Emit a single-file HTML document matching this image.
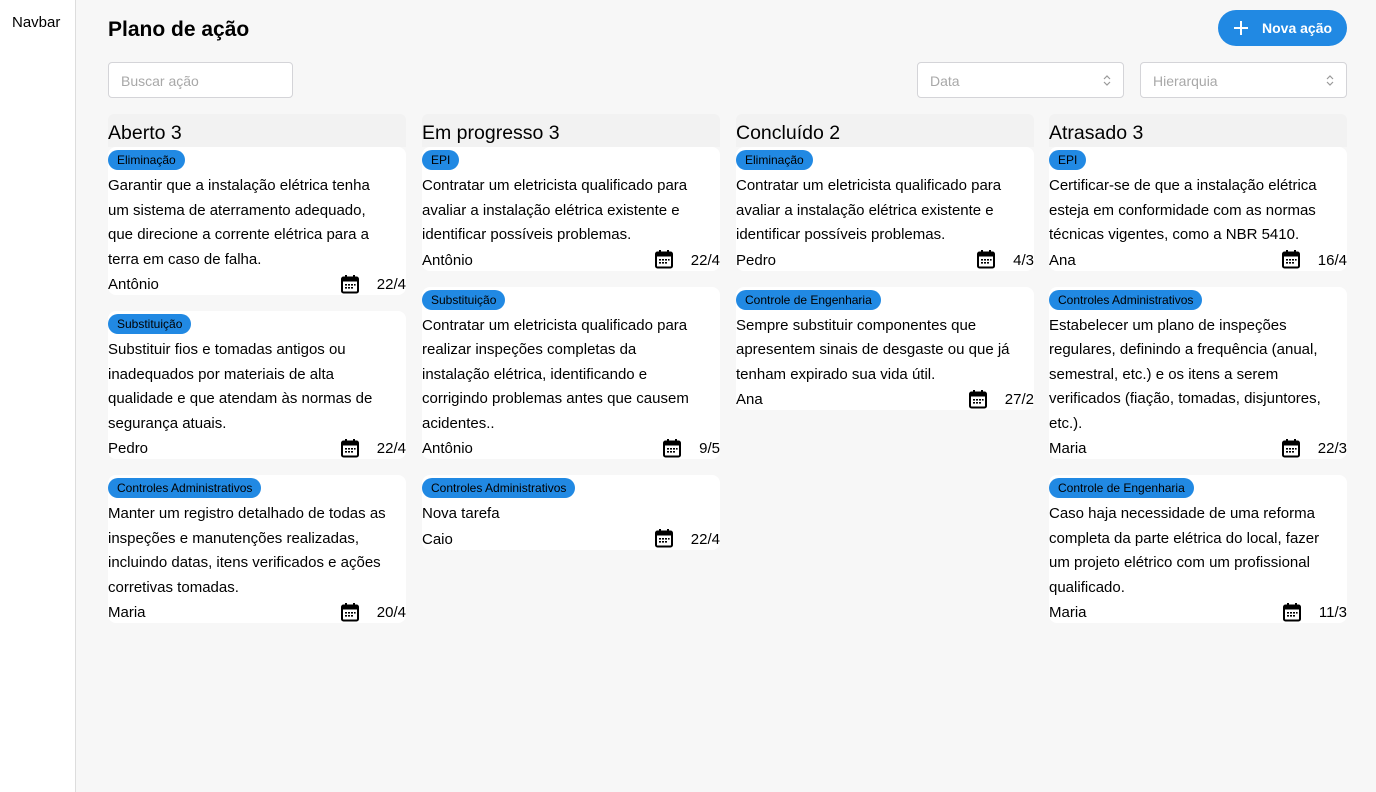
<!DOCTYPE html>
<html><head><meta charset="utf-8"><style>
*{box-sizing:border-box;margin:0;padding:0}
body{width:1376px;height:792px;overflow:hidden;background:#f7f7f7;font-family:"Liberation Sans",sans-serif;color:#000;position:relative}
.nav{position:absolute;left:0;top:0;width:76px;height:792px;background:#fff;border-right:1px solid #ddd;font-size:15px;padding:14px 0 0 12px}
h1{position:absolute;left:108px;top:18px;font-size:21px;font-weight:bold}
.btn{position:absolute;left:1218px;top:10px;width:129px;height:36px;border-radius:18px;background:#2189e3;color:#fff;font-weight:bold;font-size:14px;line-height:36px;padding-left:44px}
.btn svg{position:absolute;left:15px;top:10px}
.inp{position:absolute;top:62px;height:36px;background:#fff;border:1px solid #d4d4d8;border-radius:4px;color:#a8a8a8;font-size:14px;line-height:36px;padding-left:12px}
.inp svg{position:absolute;right:12px;top:11px}
.col{position:absolute;top:114px;width:298px}
.ch{height:33px;background:#f2f2f2;font-size:19.5px;line-height:38px;border-radius:6px 6px 0 0}
.card{background:#fff;border-radius:8px;margin-bottom:16px}
.card:first-of-type{border-radius:0 0 8px 8px}
.tag{display:inline-block;margin-top:3px;height:20px;line-height:21px;padding:0 9px;border-radius:10px;background:#2189e3;font-size:12px;margin-bottom:3px;vertical-align:top}
.t{font-size:15px;line-height:24.5px;white-space:nowrap;padding-top:1px}
.f{display:flex;font-size:15px;line-height:24.5px;height:23px;align-items:center;padding-top:0}
.f span{position:relative;top:2px}
.f span:first-child{flex:1}
.f svg{margin-right:17px;margin-top:0}
</style></head><body>
<div class="nav">Navbar</div>
<h1>Plano de ação</h1>
<div class="btn"><svg width="16" height="16" viewBox="0 0 16 16"><path d="M8 1v14M1 8h14" stroke="#fff" stroke-width="2"/></svg>Nova ação</div>
<div class="inp" style="left:108px;width:185px">Buscar ação</div>
<div class="inp" style="left:917px;width:207px">Data<svg width="8" height="13" viewBox="0 0 8 13"><path d="M1 5l3-3 3 3M1 8l3 3 3-3" stroke="#999" fill="none" stroke-width="1.2"/></svg></div>
<div class="inp" style="left:1140px;width:207px">Hierarquia<svg width="8" height="13" viewBox="0 0 8 13"><path d="M1 5l3-3 3 3M1 8l3 3 3-3" stroke="#999" fill="none" stroke-width="1.2"/></svg></div>

<svg width="0" height="0" style="position:absolute"><defs><symbol id="cal" viewBox="0 0 20 20"><rect x="2" y="3.5" width="16" height="15" rx="1.5" fill="none" stroke="#000" stroke-width="2"/><rect x="2" y="3.5" width="16" height="4" fill="#000"/><path d="M6 1v4M14 1v4" stroke="#000" stroke-width="2"/><g fill="#000"><rect x="5" y="10" width="2" height="1.6"/><rect x="8" y="10" width="2" height="1.6"/><rect x="11" y="10" width="2" height="1.6"/><rect x="14" y="10" width="1.6" height="1.6"/><rect x="5" y="13" width="2" height="1.6"/><rect x="8" y="13" width="2" height="1.6"/><rect x="11" y="13" width="2" height="1.6"/></g></symbol></defs></svg>

<div class="col" style="left:108px">
<div class="ch">Aberto 3</div>
<div class="card"><span class="tag">Eliminação</span><div class="t">Garantir que a instalação elétrica tenha<br>um sistema de aterramento adequado,<br>que direcione a corrente elétrica para a<br>terra em caso de falha.</div><div class="f"><span>Antônio</span><svg width="20" height="20"><use href="#cal"/></svg><span>22/4</span></div></div>
<div class="card"><span class="tag">Substituição</span><div class="t">Substituir fios e tomadas antigos ou<br>inadequados por materiais de alta<br>qualidade e que atendam às normas de<br>segurança atuais.</div><div class="f"><span>Pedro</span><svg width="20" height="20"><use href="#cal"/></svg><span>22/4</span></div></div>
<div class="card"><span class="tag">Controles Administrativos</span><div class="t">Manter um registro detalhado de todas as<br>inspeções e manutenções realizadas,<br>incluindo datas, itens verificados e ações<br>corretivas tomadas.</div><div class="f"><span>Maria</span><svg width="20" height="20"><use href="#cal"/></svg><span>20/4</span></div></div>
</div>

<div class="col" style="left:422px">
<div class="ch">Em progresso 3</div>
<div class="card"><span class="tag">EPI</span><div class="t">Contratar um eletricista qualificado para<br>avaliar a instalação elétrica existente e<br>identificar possíveis problemas.</div><div class="f"><span>Antônio</span><svg width="20" height="20"><use href="#cal"/></svg><span>22/4</span></div></div>
<div class="card"><span class="tag">Substituição</span><div class="t">Contratar um eletricista qualificado para<br>realizar inspeções completas da<br>instalação elétrica, identificando e<br>corrigindo problemas antes que causem<br>acidentes..</div><div class="f"><span>Antônio</span><svg width="20" height="20"><use href="#cal"/></svg><span>9/5</span></div></div>
<div class="card"><span class="tag">Controles Administrativos</span><div class="t">Nova tarefa</div><div class="f"><span>Caio</span><svg width="20" height="20"><use href="#cal"/></svg><span>22/4</span></div></div>
</div>

<div class="col" style="left:736px">
<div class="ch">Concluído 2</div>
<div class="card"><span class="tag">Eliminação</span><div class="t">Contratar um eletricista qualificado para<br>avaliar a instalação elétrica existente e<br>identificar possíveis problemas.</div><div class="f"><span>Pedro</span><svg width="20" height="20"><use href="#cal"/></svg><span>4/3</span></div></div>
<div class="card"><span class="tag">Controle de Engenharia</span><div class="t">Sempre substituir componentes que<br>apresentem sinais de desgaste ou que já<br>tenham expirado sua vida útil.</div><div class="f"><span>Ana</span><svg width="20" height="20"><use href="#cal"/></svg><span>27/2</span></div></div>
</div>

<div class="col" style="left:1049px">
<div class="ch">Atrasado 3</div>
<div class="card"><span class="tag">EPI</span><div class="t">Certificar-se de que a instalação elétrica<br>esteja em conformidade com as normas<br>técnicas vigentes, como a NBR 5410.</div><div class="f"><span>Ana</span><svg width="20" height="20"><use href="#cal"/></svg><span>16/4</span></div></div>
<div class="card"><span class="tag">Controles Administrativos</span><div class="t">Estabelecer um plano de inspeções<br>regulares, definindo a frequência (anual,<br>semestral, etc.) e os itens a serem<br>verificados (fiação, tomadas, disjuntores,<br>etc.).</div><div class="f"><span>Maria</span><svg width="20" height="20"><use href="#cal"/></svg><span>22/3</span></div></div>
<div class="card"><span class="tag">Controle de Engenharia</span><div class="t">Caso haja necessidade de uma reforma<br>completa da parte elétrica do local, fazer<br>um projeto elétrico com um profissional<br>qualificado.</div><div class="f"><span>Maria</span><svg width="20" height="20"><use href="#cal"/></svg><span>11/3</span></div></div>
</div>
</body></html>
